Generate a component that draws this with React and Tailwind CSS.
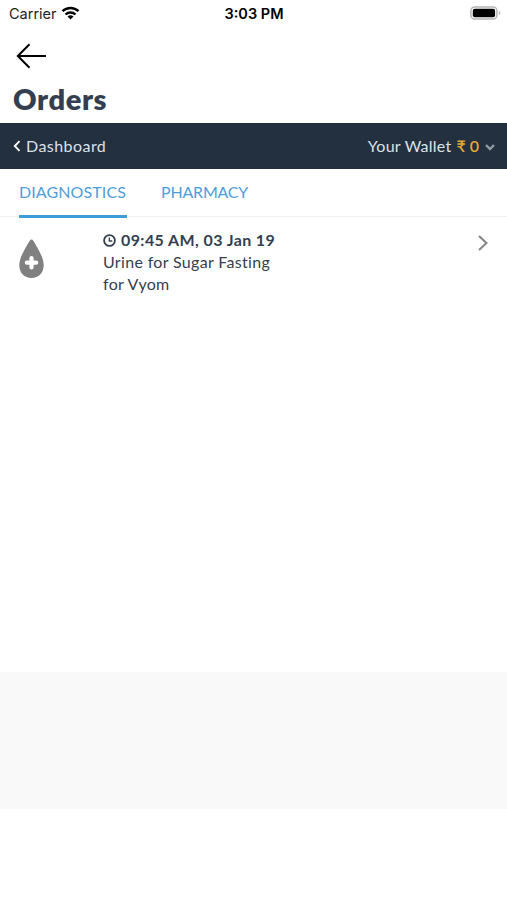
import React, { useState } from "react";

const tabs = [
  { id: "diagnostics", label: "DIAGNOSTICS", box: "ml-[19px] w-[108px]", text: "tracking-[0.1px]" },
  { id: "pharmacy", label: "PHARMACY", box: "ml-[34px] w-[88px]", text: "tracking-[-0.2px]" },
];

const orders = [
  {
    id: 1,
    time: "09:45 AM, 03 Jan 19",
    test: "Urine for Sugar Fasting",
    patient: "for Vyom",
  },
];

const StatusBar = () => (
  <div className="flex h-7 items-center font-['Inter',sans-serif] text-black">
    <div className="flex flex-1 items-center pl-[9px]">
      <span className="text-[14.5px] leading-7 text-[#222]">Carrier</span>
      <svg width="19" height="14" viewBox="0 0 18 14" className="ml-[4px] -mt-[2px]">
        <g fill="none" stroke="currentColor" strokeWidth="2.4">
          <path d="M1 5.2a11.6 11.6 0 0 1 16 0" />
          <path d="M4 8.5a7.3 7.3 0 0 1 10 0" />
        </g>
        <path d="M9 13.6 6 10.6a4.4 4.4 0 0 1 6 0z" fill="currentColor" />
      </svg>
    </div>
    <span className="pr-[2px] text-[14.5px] font-semibold leading-7">3:03 PM</span>
    <div className="-mt-[2px] flex flex-1 justify-end pr-[6px]">
      <svg width="31" height="14" viewBox="0 0 31 14">
        <rect x="0.9" y="0.9" width="26" height="12.2" rx="3.8" fill="#fff" stroke="#b5b5b5" strokeWidth="1.5" />
        <rect x="2.8" y="2.7" width="22.3" height="8.6" rx="2" fill="#000" />
        <path d="M28.8 4.8c2 .8 2 3.6 0 4.4z" fill="#b5b5b5" />
      </svg>
    </div>
  </div>
);

const OrderRow = ({ order }) => (
  <div className="flex items-start pt-[11px] pl-[19px] pr-[18px] text-[#333f50]">
    <svg width="25" height="40" viewBox="0 0 25 40" className="mt-[10px]">
      <path
        d="M12.5.5c.9 0 1.5.6 2 1.5 4.2 7.5 10.2 16.2 10.2 24.2C24.7 33.8 19.5 39 12.5 39S.3 33.8.3 26.2C.3 18.2 6.300 9.500 10.500 2c.5-.9 1.100-1.500 2-1.500z"
        fill="#808080"
      />
      <path
        d="M12.5 19v9.400M7.800 23.700h9.400"
        stroke="#fff"
        strokeWidth="4.2"
        strokeLinecap="round"
      />
    </svg>
    <div className="ml-[59px] flex-1 text-[16px] leading-[22px] [font-variant-ligatures:none]">
      <div className="flex items-center font-bold">
        <svg
          width="13"
          height="13"
          viewBox="0 0 13 13"
          fill="none"
          stroke="currentColor"
          className="mr-[5px]"
        >
          <circle cx="6.5" cy="6.5" r="5.4" strokeWidth="1.8" />
          <path d="M6.3 3.5v3.500h3" strokeWidth="1.3" />
        </svg>
        <span className="tracking-[0.4px]">{order.time}</span>
      </div>
      <div className="tracking-[0.33px]">{order.test}</div>
      <div className="tracking-[0.3px]">{order.patient}</div>
    </div>
    <svg
      width="12"
      height="16"
      viewBox="0 0 12 16"
      fill="none"
      stroke="#858585"
      strokeWidth="2"
      className="mt-[6px]"
    >
      <path d="m2 1 7.5 7L2 15" />
    </svg>
  </div>
);

const App = () => {
  const [activeTab, setActiveTab] = useState("diagnostics");

  return (
    <div className="flex h-[900px] w-full flex-col overflow-hidden bg-white font-['Lato',sans-serif]">
      {/* Header */}
      <div className="h-[123px]">
        <StatusBar />
        <button className="ml-4 mt-[15px] block">
          <svg
            width="31"
            height="26"
            viewBox="0 0 31 26"
            fill="none"
            stroke="#000"
            strokeWidth="2"
          >
            <path d="M13.5 1.300 1.800 13l11.700 11.700M1.800 13H30" />
          </svg>
        </button>
        <h1 className="ml-[13px] mt-[14px] text-[29px] font-extrabold leading-8 tracking-[0.6px] text-[#333f50]">
          Orders
        </h1>
      </div>

      {/* Wallet bar */}
      <div className="flex h-[46px] items-center justify-between bg-[#233040] pl-[13px] pr-[12px] text-[16px] text-[#dce1e8]">
        <button className="flex items-center tracking-[0.45px]">
          <svg
            width="8"
            height="12"
            viewBox="0 0 8 12"
            fill="none"
            stroke="#fff"
            strokeWidth="1.9"
            className="mr-[5px]"
          >
            <path d="M6.5 1.200 1.800 6l4.700 4.800" />
          </svg>
          Dashboard
        </button>
        <button className="flex items-center">
          <span className="tracking-[0.25px]">Your Wallet</span>
          <span className="ml-[5px] font-semibold text-[#e5aa36]">₹ 0</span>
          <svg
            width="10"
            height="7"
            viewBox="0 0 10 7"
            fill="none"
            stroke="#929aa3"
            strokeWidth="2.4"
            className="ml-[6px] mt-[3px]"
          >
            <path d="m1 1 4 4 4-4" />
          </svg>
        </button>
      </div>

      {/* Tabs */}
      <div className="flex h-[48px] border-b border-[#f2f2f2]">
        {tabs.map((tab) => (
          <button
            key={tab.id}
            onClick={() => setActiveTab(tab.id)}
            className={`${tab.box} h-[49px] whitespace-nowrap border-b-[3px] pb-px text-left text-[16px] text-[#4c9ed9] ${
              activeTab === tab.id ? "border-[#3d9bd8]" : "border-transparent"
            }`}
          >
            <span className={tab.text}>{tab.label}</span>
          </button>
        ))}
      </div>

      {/* Order List */}
      <div className="h-[455px] pt-px">
        {orders.map((order) => (
          <OrderRow key={order.id} order={order} />
        ))}
      </div>

      <div className="h-[137px] bg-[#f9f9f9]" />
    </div>
  );
};

export default App;
